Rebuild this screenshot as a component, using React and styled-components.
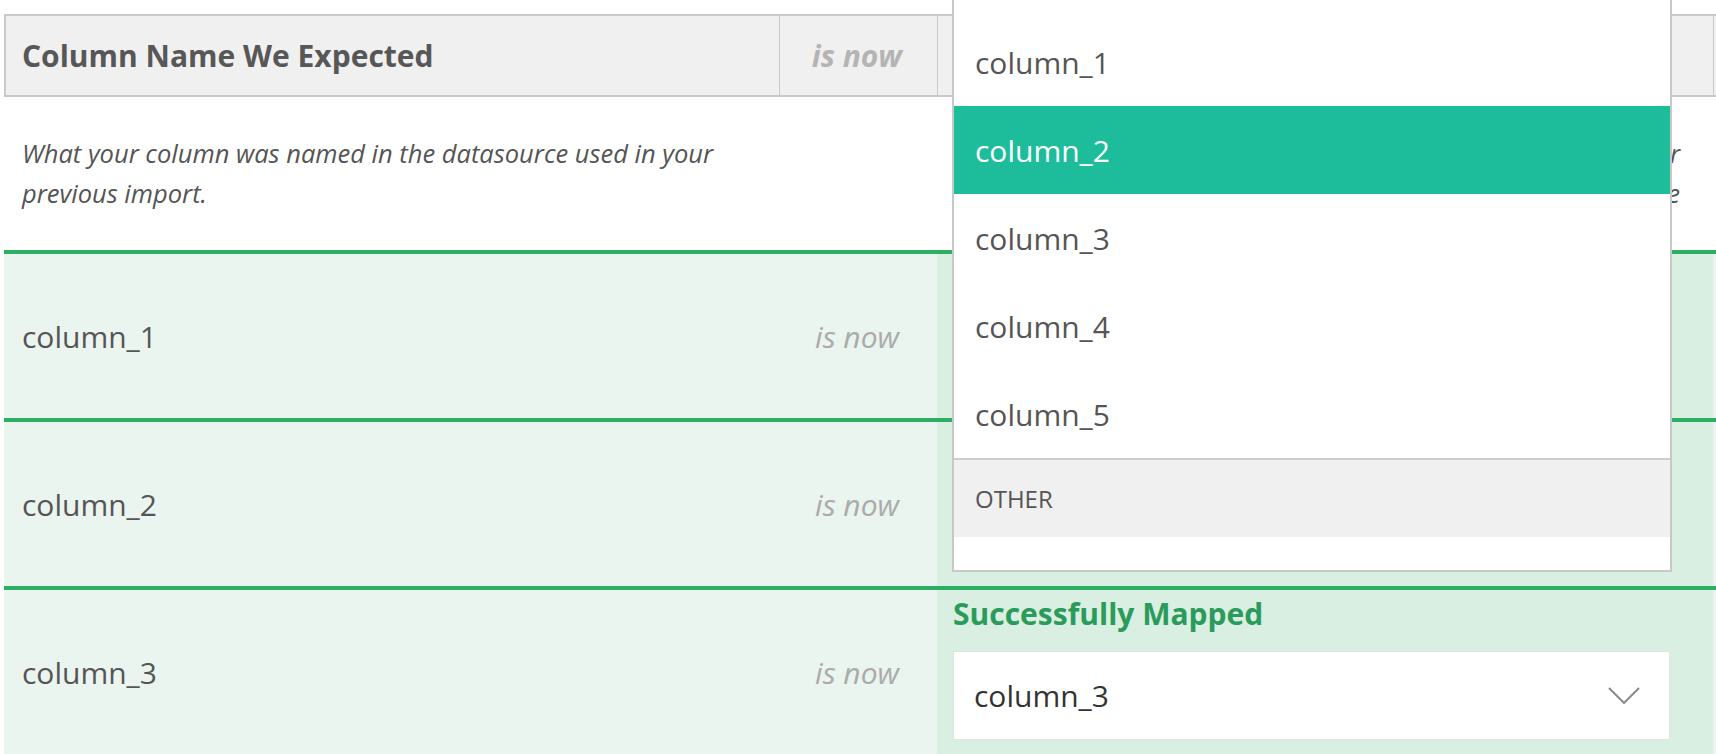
import React from "react";
import styled, { createGlobalStyle } from "styled-components";

const GlobalStyle = createGlobalStyle`
  html, body {
    margin: 0;
    padding: 0;
    overflow: hidden;
    background: #ffffff;
  }
  body {
    font-family: "Open Sans", "Noto Sans", Arial, sans-serif;
    color: #555555;
  }
  * { box-sizing: border-box; }
`;

const COLS = "775px 158px 776px 400px";

const Page = styled.div`
  position: relative;
  width: max-content;
  padding: 14px 0 0 4px;
`;

const HeaderRow = styled.div`
  display: grid;
  grid-template-columns: ${COLS};
  height: 83px;
  background: #f0f0f0;
  border-top: 2px solid #c9c9c9;
  border-bottom: 2px solid #c9c9c9;
`;

const HeaderCell = styled.div`
  display: flex;
  align-items: center;
  justify-content: ${(p) => (p.$end ? "flex-end" : "flex-start")};
  padding: ${(p) => (p.$end ? "0 35px 0 0" : "0 18px 0 16px")};
  border-left: ${(p) => (p.$first ? "2px" : "1px")} solid #c9c9c9;
  font-size: 30px;
  font-weight: 700;
  font-style: ${(p) => (p.$end ? "italic" : "normal")};
  color: ${(p) => (p.$end ? "#b4b4b4" : "#575757")};
  white-space: nowrap;
  overflow: hidden;
`;

const DescRow = styled.div`
  display: grid;
  grid-template-columns: ${COLS};
`;

const DescCell = styled.div`
  padding: 36px ${(p) => (p.$justify ? "33px" : "18px")} 37px
    ${(p) => (p.$justify ? "22px" : "18px")};
  font-size: 25.5px;
  line-height: 40px;
  font-style: italic;
  color: #555555;
  text-align: ${(p) => (p.$justify ? "justify" : "left")};
  text-align-last: ${(p) => (p.$justify ? "justify" : "auto")};
`;

const MappingRow = styled.div`
  display: grid;
  grid-template-columns: ${COLS};
  height: 168px;
  border-top: 4px solid #2daf63;
`;

const NameCell = styled.div`
  display: flex;
  align-items: center;
  padding-left: 18px;
  background: #eaf5ef;
  font-size: 30px;
  color: #555555;
`;

const IsNowCell = styled.div`
  display: flex;
  align-items: center;
  justify-content: flex-end;
  padding-right: 38px;
  background: #eaf5ef;
  font-size: 30px;
  font-style: italic;
  color: #ababab;
`;

const MatchCell = styled.div`
  display: flex;
  flex-direction: column;
  padding: 4px 43px 14px 16px;
  background: #d8efe1;
`;

const FillerCell = styled.div`
  background: #eaf5ef;
`;

const StatusLabel = styled.div`
  font-size: 30px;
  line-height: 40px;
  font-weight: 700;
  color: #2a9b5a;
  margin-bottom: 17px;
`;

const SelectBox = styled.div`
  display: flex;
  align-items: center;
  justify-content: space-between;
  height: 89px;
  padding: 0 29px 0 20px;
  background: #ffffff;
  border: 1px solid #e2e2e2;
  font-size: 30px;
  color: #333333;
`;

const Menu = styled.div`
  position: absolute;
  left: 952px;
  top: -2px;
  z-index: 10;
  width: 720px;
  height: 574px;
  padding-top: 18px;
  background: #ffffff;
  border: 2px solid #c8c8c8;
  overflow: hidden;
`;

const MenuItem = styled.div`
  display: flex;
  align-items: center;
  height: 88px;
  padding-left: 21px;
  font-size: 30px;
  color: ${(p) => (p.$active ? "#ffffff" : "#555555")};
  background: ${(p) => (p.$active ? "#1dbd9b" : "#ffffff")};
`;

const MenuGroup = styled.div`
  display: flex;
  align-items: center;
  height: 79px;
  padding-left: 21px;
  background: #f0f0f0;
  border-top: 2px solid #cccccc;
  font-size: 24px;
  color: #555555;
  text-transform: uppercase;
`;

const Chevron = () => (
  <svg width="32" height="17" viewBox="0 0 32 17" aria-hidden="true">
    <polyline
      points="1,1 16,16 31,1"
      fill="none"
      stroke="#8a8a8a"
      strokeWidth="2"
    />
  </svg>
);

const rows = [
  { name: "column_1", mapped: false },
  { name: "column_2", mapped: false },
  { name: "column_3", mapped: true },
];
const options = ["column_1", "column_2", "column_3", "column_4", "column_5"];

export default function App() {
  return (
    <>
      <GlobalStyle />
      <Page>
        <HeaderRow>
          <HeaderCell $first>Column Name We Expected</HeaderCell>
          <HeaderCell $end>is now</HeaderCell>
          <HeaderCell />
          <HeaderCell />
        </HeaderRow>
        <DescRow>
          <DescCell>
            What your column was named in the datasource used in your previous
            import.
          </DescCell>
          <DescCell />
          <DescCell $justify>
            What your column is named in the datasource used in your
            <br />
            current import, matched to the column we expected to see
          </DescCell>
          <DescCell />
        </DescRow>
        {rows.map((row) => (
          <MappingRow key={row.name}>
            <NameCell>{row.name}</NameCell>
            <IsNowCell>is now</IsNowCell>
            <MatchCell>
              {row.mapped && (
                <>
                  <StatusLabel>Successfully Mapped</StatusLabel>
                  <SelectBox>
                    <span>{row.name}</span>
                    <Chevron />
                  </SelectBox>
                </>
              )}
            </MatchCell>
            <FillerCell />
          </MappingRow>
        ))}
        <Menu>
          {options.map((opt) => (
            <MenuItem key={opt} $active={opt === "column_2"}>
              {opt}
            </MenuItem>
          ))}
          <MenuGroup>Other</MenuGroup>
        </Menu>
      </Page>
    </>
  );
}
